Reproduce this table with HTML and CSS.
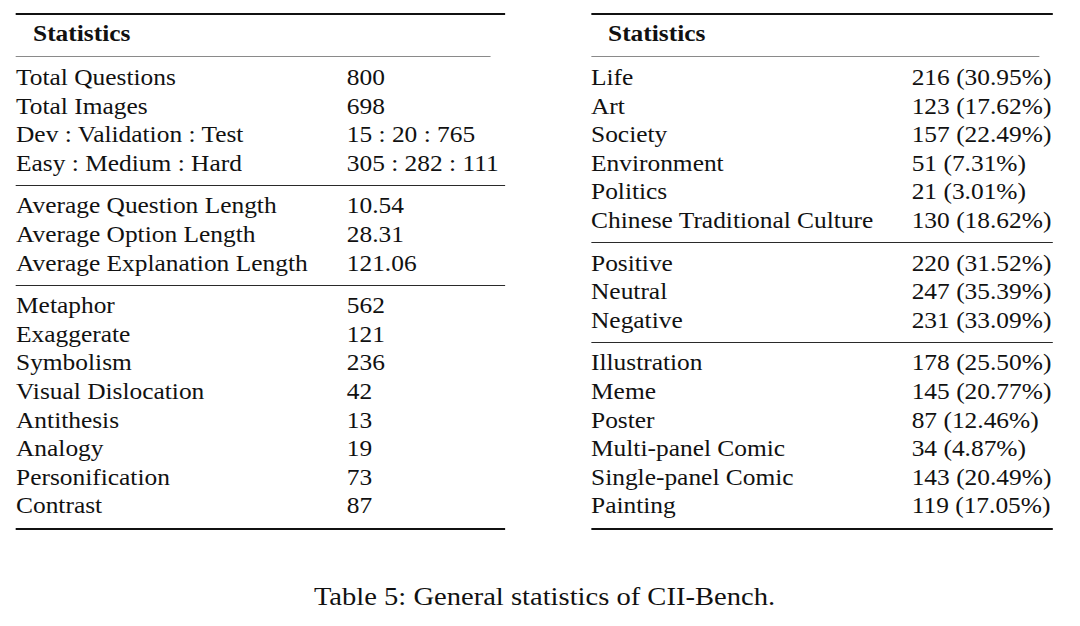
FILE: index.html
```html
<!DOCTYPE html>
<html lang="en">
<head>
<meta charset="utf-8">
<title>Table 5: General statistics of CII-Bench</title>
<link rel="stylesheet" href="styles.css">
</head>
<body>
<main class="sheet">
  <div class="tables">
    <section class="stats stats-left">
      <div class="stats-head">Statistics</div>
      <div class="group">
        <span>Total Questions</span><span>800</span>
        <span>Total Images</span><span>698</span>
        <span>Dev : Validation : Test</span><span>15 : 20 : 765</span>
        <span>Easy : Medium : Hard</span><span>305 : 282 : 111</span>
      </div>
      <div class="group">
        <span>Average Question Length</span><span>10.54</span>
        <span>Average Option Length</span><span>28.31</span>
        <span>Average Explanation Length</span><span>121.06</span>
      </div>
      <div class="group group-last">
        <span>Metaphor</span><span>562</span>
        <span>Exaggerate</span><span>121</span>
        <span>Symbolism</span><span>236</span>
        <span>Visual Dislocation</span><span>42</span>
        <span>Antithesis</span><span>13</span>
        <span>Analogy</span><span>19</span>
        <span>Personification</span><span>73</span>
        <span>Contrast</span><span>87</span>
      </div>
    </section>
    <section class="stats stats-right">
      <div class="stats-head">Statistics</div>
      <div class="group">
        <span>Life</span><span>216 (30.95%)</span>
        <span>Art</span><span>123 (17.62%)</span>
        <span>Society</span><span>157 (22.49%)</span>
        <span>Environment</span><span>51 (7.31%)</span>
        <span>Politics</span><span>21 (3.01%)</span>
        <span>Chinese Traditional Culture</span><span>130 (18.62%)</span>
      </div>
      <div class="group">
        <span>Positive</span><span>220 (31.52%)</span>
        <span>Neutral</span><span>247 (35.39%)</span>
        <span>Negative</span><span>231 (33.09%)</span>
      </div>
      <div class="group group-last">
        <span>Illustration</span><span>178 (25.50%)</span>
        <span>Meme</span><span>145 (20.77%)</span>
        <span>Poster</span><span>87 (12.46%)</span>
        <span>Multi-panel Comic</span><span>34 (4.87%)</span>
        <span>Single-panel Comic</span><span>143 (20.49%)</span>
        <span>Painting</span><span>119 (17.05%)</span>
      </div>
    </section>
  </div>
  <p class="caption">Table 5: General statistics of CII-Bench.</p>
</main>
</body>
</html>
```
FILE: styles.css
```css
html, body {
  margin: 0;
  padding: 0;
  background: #ffffff;
}

body {
  width: 1080px;
  height: 626px;
  overflow: hidden;
  font-family: "Liberation Serif", "Times New Roman", serif;
  color: #111111;
}

/* the reference is horizontally stretched by ~1.12 */
.sheet {
  width: 964.3px;
  transform: scaleX(1.12);
  transform-origin: 0 0;
}

.tables {
  display: flex;
  align-items: flex-start;
  padding-top: 13px;
  padding-left: 14.3px;
  gap: 76.8px;
}

.stats {
  border-top: 2px solid #111;
  border-bottom: 2px solid #111;
  font-size: 22.7px;
  line-height: 28.6px;
}

.stats-left {
  width: 436.6px;
}

.stats-right {
  width: 412.5px;
}

.stats-head {
  font-weight: bold;
  padding: 5px 0 7.4px 15.2px;
  margin-right: 12.5px;
  border-bottom: 1px solid #8a8a8a;
}

.group {
  display: grid;
  padding: 7px 0 6.5px;
  white-space: nowrap;
}

.stats-left .group {
  grid-template-columns: 295.3px 1fr;
}

.stats-right .group {
  grid-template-columns: 286.3px 1fr;
}

.group + .group {
  border-top: 1.5px solid #2a2a2a;
  padding-top: 6.5px;
}

.group-last {
  padding-bottom: 7.5px;
}

.caption {
  margin: 52px 0 0;
  padding-left: 8px;
  text-align: center;
  font-size: 25.5px;
  line-height: 30px;
  white-space: nowrap;
}
```
